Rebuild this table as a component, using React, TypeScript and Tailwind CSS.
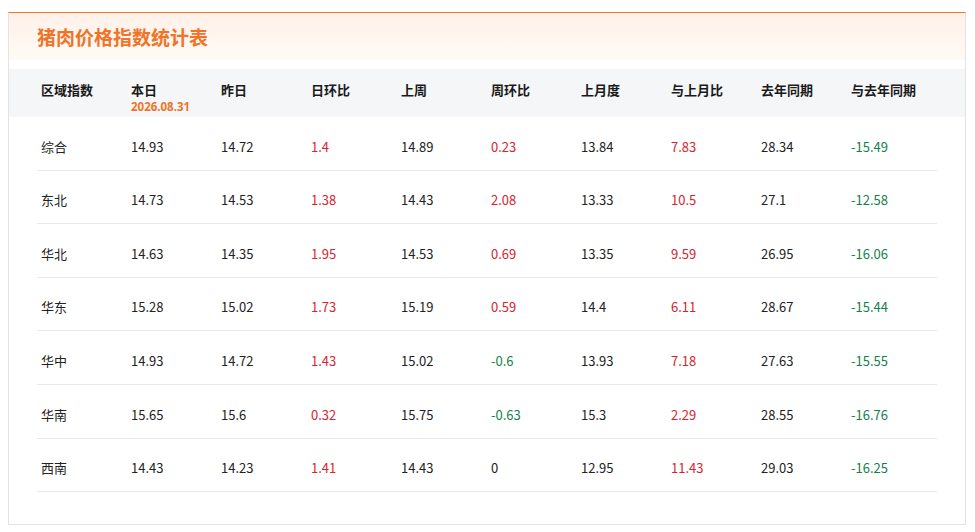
const FONT = { fontFamily: '"Noto Sans CJK SC", "Noto Sans", sans-serif' };
const DATE_FONT = { fontFamily: '"Noto Sans", "Noto Sans CJK SC", sans-serif' };

type Row = {
  name: string;
  today: number;
  yesterday: number;
  dayRatio: number;
  lastWeek: number;
  weekRatio: number;
  lastMonth: number;
  monthRatio: number;
  lastYear: number;
  yearRatio: number;
};

const rows: Row[] = [
  { name: "综合", today: 14.93, yesterday: 14.72, dayRatio: 1.4, lastWeek: 14.89, weekRatio: 0.23, lastMonth: 13.84, monthRatio: 7.83, lastYear: 28.34, yearRatio: -15.49 },
  { name: "东北", today: 14.73, yesterday: 14.53, dayRatio: 1.38, lastWeek: 14.43, weekRatio: 2.08, lastMonth: 13.33, monthRatio: 10.5, lastYear: 27.1, yearRatio: -12.58 },
  { name: "华北", today: 14.63, yesterday: 14.35, dayRatio: 1.95, lastWeek: 14.53, weekRatio: 0.69, lastMonth: 13.35, monthRatio: 9.59, lastYear: 26.95, yearRatio: -16.06 },
  { name: "华东", today: 15.28, yesterday: 15.02, dayRatio: 1.73, lastWeek: 15.19, weekRatio: 0.59, lastMonth: 14.4, monthRatio: 6.11, lastYear: 28.67, yearRatio: -15.44 },
  { name: "华中", today: 14.93, yesterday: 14.72, dayRatio: 1.43, lastWeek: 15.02, weekRatio: -0.6, lastMonth: 13.93, monthRatio: 7.18, lastYear: 27.63, yearRatio: -15.55 },
  { name: "华南", today: 15.65, yesterday: 15.6, dayRatio: 0.32, lastWeek: 15.75, weekRatio: -0.63, lastMonth: 15.3, monthRatio: 2.29, lastYear: 28.55, yearRatio: -16.76 },
  { name: "西南", today: 14.43, yesterday: 14.23, dayRatio: 1.41, lastWeek: 14.43, weekRatio: 0, lastMonth: 12.95, monthRatio: 11.43, lastYear: 29.03, yearRatio: -16.25 },
];

const headers = ["区域指数", "本日", "昨日", "日环比", "上周", "周环比", "上月度", "与上月比", "去年同期", "与去年同期"];

// red for rises, green for falls, plain for zero
function Ratio({ value }: { value: number }) {
  const cls = value > 0 ? "text-[#d9232e]" : value < 0 ? "text-[#13804a]" : "text-[#222]";
  return <span className={cls}>{value}</span>;
}

function Cell({ children }: { children: React.ReactNode }) {
  return <div className="w-[90px] pl-[4px]">{children}</div>;
}

export default function App() {
  return (
    <div className="bg-white w-[975px] h-[532px] pt-[12px] pl-[8px]" style={FONT}>
      <div className="w-[958px] h-[513px] border border-[#e3e3e3] border-t-[#f07528] bg-white flex flex-col">
        <div className="h-[47px] flex items-center pl-[28px] bg-gradient-to-b from-[#fff1e8] to-[#fffaf6]">
          <h1 className="text-[19px] font-bold text-[#f07328] pt-[2px]">猪肉价格指数统计表</h1>
        </div>

        <div className="mt-[9px] h-[48px] bg-[#f4f6f8] pl-[28px] flex pt-[12px] text-[13px] font-bold text-[#1a1a1a]">
          {headers.map((h, i) => (
            <Cell key={h}>
              <div className="leading-[17px]">{h}</div>
              {i === 1 && (
                <div className="text-[11.5px] leading-[14px] mt-[2px] text-[#f07328] font-bold" style={DATE_FONT}>
                  2026.08.31
                </div>
              )}
            </Cell>
          ))}
        </div>

        <div className="pl-[28px]">
          {rows.map((r) => (
            <div key={r.name} className="w-[900px] h-[53.6px] flex items-center pt-[6px] border-b border-[#e9e9e9] text-[13px] text-[#222]">
              <Cell>{r.name}</Cell>
              <Cell>{r.today}</Cell>
              <Cell>{r.yesterday}</Cell>
              <Cell><Ratio value={r.dayRatio} /></Cell>
              <Cell>{r.lastWeek}</Cell>
              <Cell><Ratio value={r.weekRatio} /></Cell>
              <Cell>{r.lastMonth}</Cell>
              <Cell><Ratio value={r.monthRatio} /></Cell>
              <Cell>{r.lastYear}</Cell>
              <Cell><Ratio value={r.yearRatio} /></Cell>
            </div>
          ))}
        </div>
      </div>
    </div>
  );
}
